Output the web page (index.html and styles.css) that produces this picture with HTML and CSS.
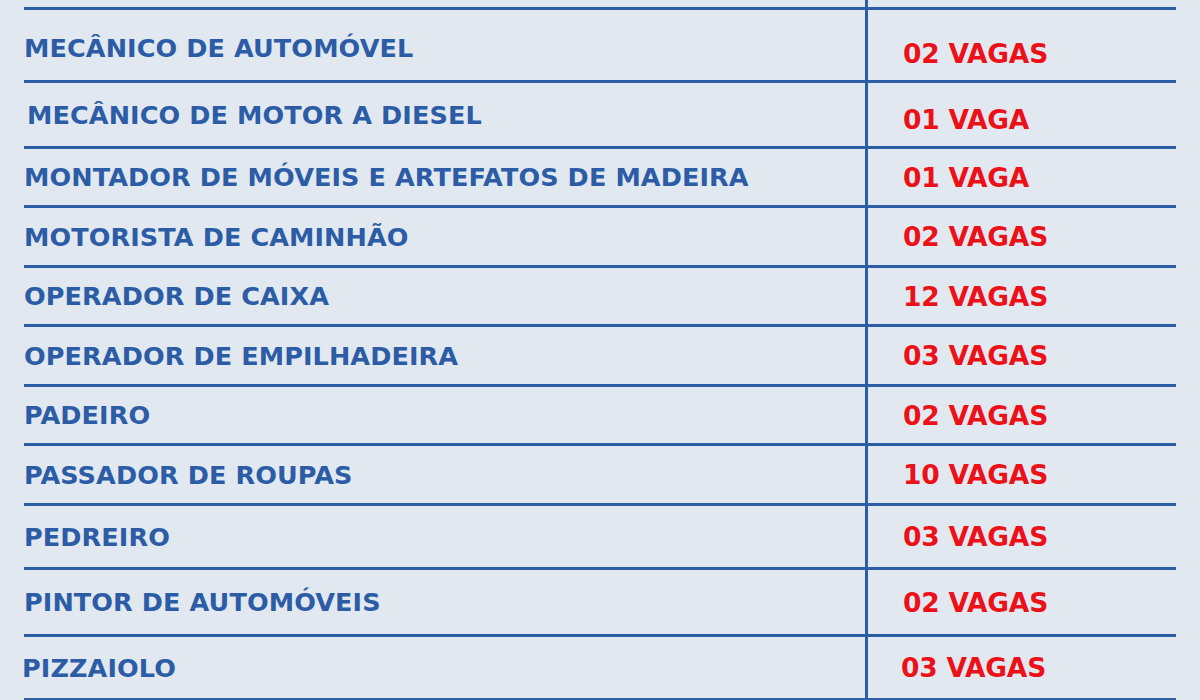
FILE: index.html
```html
<!DOCTYPE html>
<html lang="pt-BR">
<head>
<meta charset="utf-8">
<title>Vagas</title>
<link rel="stylesheet" href="styles.css">
</head>
<body>
<div class="page">
  <div class="table">
    <div class="stub"><div></div><div class="right"></div></div>
    <div class="row"><div class="job">MECÂNICO DE AUTOMÓVEL</div><div class="right"><span class="qty">02 VAGAS</span></div></div>
    <div class="row"><div class="job">MECÂNICO DE MOTOR A DIESEL</div><div class="right"><span class="qty">01 VAGA</span></div></div>
    <div class="row"><div class="job">MONTADOR DE MÓVEIS E ARTEFATOS DE MADEIRA</div><div class="right"><span class="qty">01 VAGA</span></div></div>
    <div class="row"><div class="job">MOTORISTA DE CAMINHÃO</div><div class="right"><span class="qty">02 VAGAS</span></div></div>
    <div class="row"><div class="job">OPERADOR DE CAIXA</div><div class="right"><span class="qty">12 VAGAS</span></div></div>
    <div class="row"><div class="job">OPERADOR DE EMPILHADEIRA</div><div class="right"><span class="qty">03 VAGAS</span></div></div>
    <div class="row"><div class="job">PADEIRO</div><div class="right"><span class="qty">02 VAGAS</span></div></div>
    <div class="row"><div class="job">PASSADOR DE ROUPAS</div><div class="right"><span class="qty">10 VAGAS</span></div></div>
    <div class="row"><div class="job">PEDREIRO</div><div class="right"><span class="qty">03 VAGAS</span></div></div>
    <div class="row"><div class="job">PINTOR DE AUTOMÓVEIS</div><div class="right"><span class="qty">02 VAGAS</span></div></div>
    <div class="row last"><div class="job">PIZZAIOLO</div><div class="right"><span class="qty">03 VAGAS</span></div></div>
    <div class="stub tail"><div></div><div class="right"></div></div>
  </div>
</div>
</body>
</html>
```

FILE: styles.css
```css
html, body {
  margin: 0;
  padding: 0;
}
body {
  background: #e1e8f0;
  width: 1200px;
  height: 700px;
  overflow: hidden;
  font-family: "DejaVu Sans", "Liberation Sans", sans-serif;
}
.page {
  padding: 0 24px;
}
.table {
  display: flex;
  flex-direction: column;
}
.stub, .row {
  display: grid;
  grid-template-columns: 841px 1fr;
}
.stub {
  height: 7px;
}
.stub.tail {
  height: 10px;
}
.row {
  border-top: 3px solid #2c5ea5;
  box-sizing: border-box;
}
.row.last {
  border-bottom: 3px solid #2c5ea5;
}
.right {
  border-left: 3px solid #2c5ea5;
}
.row .right {
  display: flex;
  align-items: center;
  padding-left: 35px;
}
.job {
  display: flex;
  align-items: center;
  color: #2b5ca5;
  font-weight: bold;
  font-size: 25.5px;
  letter-spacing: 0.1px;
  white-space: nowrap;
}
.qty {
  color: #ec1018;
  font-weight: bold;
  font-size: 26.5px;
  letter-spacing: -0.2px;
}
.row:nth-child(2) { height: 73px; }
.row:nth-child(3) { height: 66px; }
.row:nth-child(4) { height: 59px; }
.row:nth-child(5) { height: 60px; }
.row:nth-child(6) { height: 59px; }
.row:nth-child(7) { height: 60px; }
.row:nth-child(8) { height: 59px; }
.row:nth-child(9) { height: 60px; }
.row:nth-child(10) { height: 64px; }
.row:nth-child(11) { height: 67px; }
.row:nth-child(12) { height: 67px; }
.row:nth-child(2) .job { padding-top: 6px; }
.row:nth-child(2) .right { padding-top: 16px; }
.row:nth-child(3) .job { padding-left: 3px; }
.row:nth-child(3) .right { padding-top: 10px; }
.row:nth-child(12) .job { padding-left: 0; margin-left: -2px; }
.row:nth-child(12) .right { padding-left: 33px; }
```
